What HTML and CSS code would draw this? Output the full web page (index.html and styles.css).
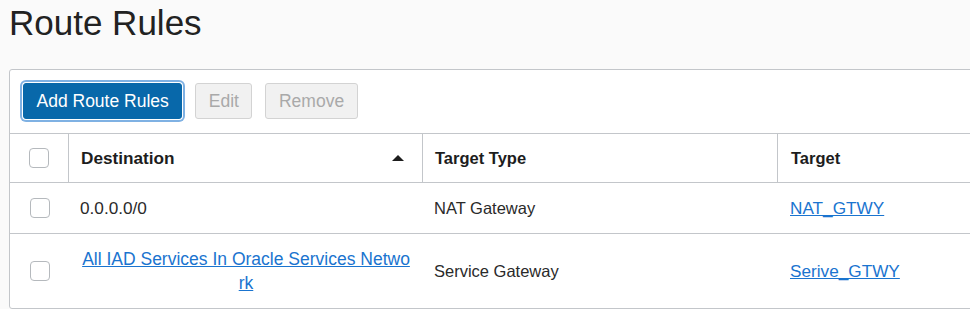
FILE: index.html
```html
<!DOCTYPE html>
<html lang="en">
<head>
<meta charset="utf-8">
<title>Route Rules</title>
<link rel="stylesheet" href="styles.css">
</head>
<body>
<h1 class="title">Route Rules</h1>
<section class="panel">
  <div class="toolbar">
    <button class="btn btn-primary" type="button">Add Route Rules</button>
    <button class="btn btn-disabled" type="button" disabled>Edit</button>
    <button class="btn btn-disabled" type="button" disabled>Remove</button>
  </div>
  <div class="grid" role="table">
    <div class="row head" role="row">
      <div class="cell check-cell" role="columnheader"><span class="checkbox"></span></div>
      <div class="cell dest" role="columnheader"><span>Destination</span><span class="sort-up"></span></div>
      <div class="cell" role="columnheader">Target Type</div>
      <div class="cell last" role="columnheader">Target</div>
    </div>
    <div class="row body-row" role="row">
      <div class="cell check-cell" role="cell"><span class="checkbox"></span></div>
      <div class="cell" role="cell">0.0.0.0/0</div>
      <div class="cell type" role="cell">NAT Gateway</div>
      <div class="cell target" role="cell"><a class="link" href="#">NAT_GTWY</a></div>
    </div>
    <div class="row body-row tall" role="row">
      <div class="cell check-cell" role="cell"><span class="checkbox"></span></div>
      <div class="cell center" role="cell"><a class="link" href="#">All IAD Services In Oracle Services Netwo<br>rk</a></div>
      <div class="cell type" role="cell">Service Gateway</div>
      <div class="cell target" role="cell"><a class="link" href="#">Serive_GTWY</a></div>
    </div>
  </div>
</section>
</body>
</html>
```
FILE: styles.css
```css
html, body {
  margin: 0;
  padding: 0;
}
body {
  background: #fafafa;
  font-family: "Liberation Sans", Arial, sans-serif;
  color: #2a2a2a;
  overflow: hidden;
  width: 970px;
  height: 309px;
}
.title {
  margin: 3px 0 0 9px;
  font-size: 35px;
  line-height: 40px;
  font-weight: normal;
  color: #222;
  height: 41px;
}
.panel {
  margin: 25px 0 0 9px;
  width: 1000px;
  background: #fff;
  border: 1px solid #c3c6ca;
  border-radius: 3px;
}
.toolbar {
  display: flex;
  gap: 13px;
  padding: 13px 13px 14px 13px;
}
.btn {
  font-family: "Liberation Sans", Arial, sans-serif;
  font-size: 17.5px;
  height: 36px;
  padding: 0 12.5px;
  border-radius: 3px;
  border: 1px solid;
  line-height: 34px;
  cursor: pointer;
}
.btn-primary {
  background: #0868aa;
  border-color: #0868aa;
  color: #fff;
  box-shadow: 0 0 0 1px #fff, 0 0 0 3px #7fb1e3;
}
.btn-disabled {
  background: #f1f1f1;
  border-color: #d3d3d3;
  color: #a9a9a9;
  cursor: default;
}
.grid {
  border-top: 1px solid #c3c6ca;
}
.row {
  display: grid;
  grid-template-columns: 59px 354px 355px 1fr;
  border-bottom: 1px solid #c3c6ca;
}
.row:last-child {
  border-bottom: none;
}
.head {
  height: 48px;
}
.head .cell {
  border-right: 1px solid #c3c6ca;
  font-weight: bold;
  font-size: 16.5px;
  color: #1d1d1d;
  padding: 0 18px 0 12px;
  justify-content: space-between;
}
.head .cell.dest {
  font-size: 17.2px;
}
.head .cell.last {
  border-right: none;
  padding-left: 13px;
}
.body-row {
  height: 50px;
}
.body-row.tall {
  height: 74px;
}
.cell {
  display: flex;
  align-items: center;
  padding: 0 11px;
  font-size: 17.2px;
  min-width: 0;
}
.cell.type {
  font-size: 16.5px;
}
.cell.target {
  padding-left: 12px;
}
.cell.center {
  justify-content: center;
  text-align: center;
  line-height: 24px;
  font-size: 17.5px;
}
.head .check-cell, .check-cell {
  justify-content: center;
  padding: 0;
}
.checkbox {
  display: block;
  width: 20px;
  height: 20px;
  box-sizing: border-box;
  border: 1px solid #b5b9bd;
  border-radius: 4px;
  background: #fff;
}
.sort-up {
  width: 0;
  height: 0;
  border-left: 6px solid transparent;
  border-right: 6px solid transparent;
  border-bottom: 6px solid #1d1d1d;
}
.link {
  color: #1a74cf;
  text-decoration: underline;
}
```
